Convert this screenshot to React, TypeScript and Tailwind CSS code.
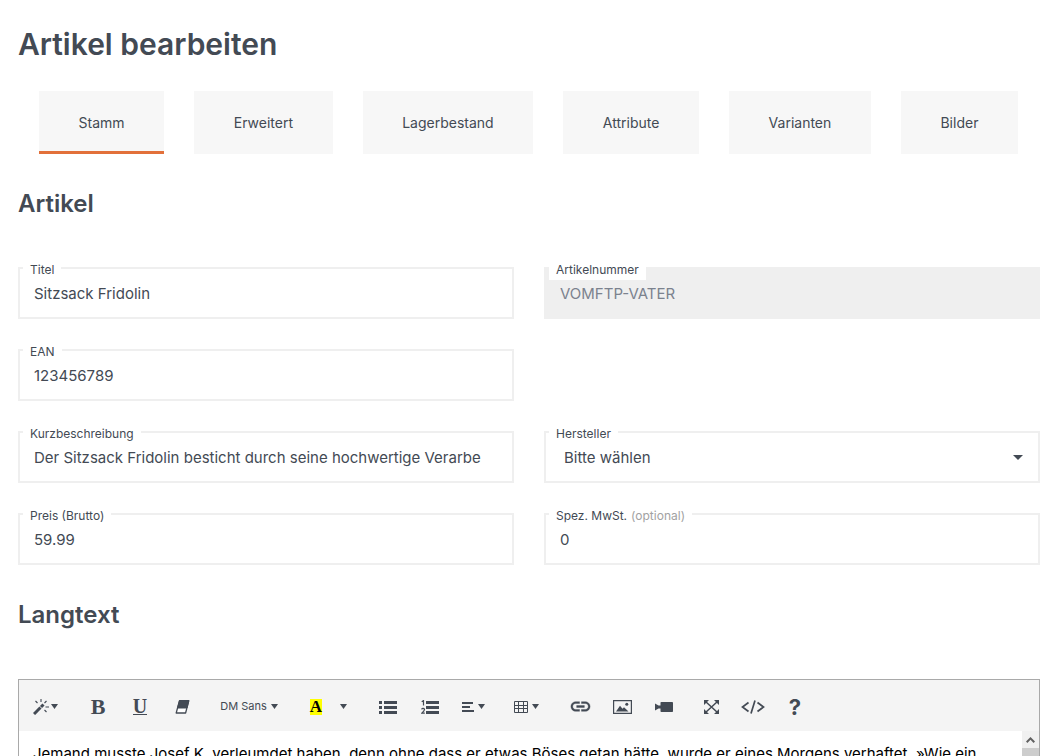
import type { ReactNode } from "react";

const tabs = ["Stamm", "Erweitert", "Lagerbestand", "Attribute", "Varianten", "Bilder"];

const inputClass =
  "block h-[52px] w-full border-2 border-[#efefef] bg-white px-3.5 text-[15px] text-[#434a54] outline-none disabled:bg-[#efefef] disabled:text-[#7b828e]";

function Field({ id, label, optional, children }: { id: string; label: string; optional?: boolean; children: ReactNode }) {
  return (
    <div className="relative">
      <label htmlFor={id} className="absolute -top-2 left-[5px] bg-white px-[7px] text-xs leading-[21px] text-[#434a54]">
        {label}
        {optional && <span className="pl-1 text-[#a2a2a2]">(optional)</span>}
      </label>
      {children}
    </div>
  );
}

function Caret() {
  return (
    <svg width="7" height="5" viewBox="0 0 7 5" fill="currentColor" aria-hidden="true">
      <path d="M0 0h7L3.5 5z" />
    </svg>
  );
}

function Tool({ label, width = "w-[42px]", children }: { label: string; width?: string; children: ReactNode }) {
  return (
    <button type="button" aria-label={label} className={`flex h-full shrink-0 items-center justify-center gap-1 ${width}`}>
      {children}
    </button>
  );
}

function Group({ children }: { children: ReactNode }) {
  return <div className="flex h-full">{children}</div>;
}

function Toolbar() {
  return (
    <div role="toolbar" aria-label="Formatierung" className="flex h-[51px] shrink-0 items-center gap-[5px] bg-[#f4f4f4] pt-0.5 text-[#434a54]">
      <Group>
        <Tool label="Stil" width="w-[53px]">
          <span className="flex items-center gap-0.5">
            <svg width="16" height="16" viewBox="0 0 16 16" stroke="currentColor" fill="none" aria-hidden="true">
              <path d="M1 15l6.500-6.500" strokeWidth="3" />
              <path d="M8 8l2.500-2.500" strokeWidth="3" />
              <path d="M8 0v3M2.500 2l2 2M13.500 2l-2 2M12.500 8H16M11.500 11l2 2" strokeWidth="1.100" />
            </svg>
            <Caret />
          </span>
        </Tool>
      </Group>
      <Group>
        <Tool label="Fett">
          <span className="font-['Liberation_Serif',serif] text-[22px] leading-none font-bold">B</span>
        </Tool>
        <Tool label="Unterstrichen">
          <span className="border-b border-current font-['Liberation_Serif',serif] text-[20px] leading-[16px] font-bold">U</span>
        </Tool>
        <Tool label="Formatierung entfernen">
          <svg width="15" height="14" viewBox="0 0 15 14" aria-hidden="true">
            <path d="M4.500 .7h9.300L10.600 13H1.200z" fill="#fff" stroke="currentColor" strokeWidth="1.300" strokeLinejoin="round" />
            <path d="M4.500 .7h9.300L12 8H2.500z" fill="currentColor" stroke="currentColor" strokeLinejoin="round" />
          </svg>
        </Tool>
      </Group>
      <Group>
        <Tool label="Schriftart" width="w-[82px]">
          <span className="text-[11px]">DM Sans</span>
          <Caret />
        </Tool>
      </Group>
      <Group>
        <Tool label="Textfarbe">
          <span className="bg-[#ffff00] font-['Liberation_Serif',serif] text-[17px] leading-4 font-bold text-black">A</span>
        </Tool>
        <Tool label="Weitere Farben" width="w-[12px]">
          <Caret />
        </Tool>
        <span className="w-[13px]" />
      </Group>
      <Group>
        <Tool label="Aufzählung">
          <svg width="18" height="14" viewBox="0 0 18 14" fill="currentColor" aria-hidden="true">
            <path d="M0 1h3v3H0zM5 1h13v3H5zM0 6h3v3H0zM5 6h13v3H5zM0 11h3v3H0zM5 11h13v3H5z" />
          </svg>
        </Tool>
        <Tool label="Nummerierte Liste">
          <svg width="18" height="14" viewBox="0 0 18 14" fill="currentColor" aria-hidden="true">
            <path d="M5 1h13v3H5zM5 6h13v3H5zM5 11h13v3H5z" />
            <path d="M.7 1.700L2.500.6v5M.6 9.400q.3-1 1.500-1t1.400 1Q3.500 10.500.8 13.200h3" fill="none" stroke="currentColor" strokeWidth="1.200" />
          </svg>
        </Tool>
        <Tool label="Absatz" width="w-[45px]">
          <svg width="12" height="10" viewBox="0 0 12 10" fill="currentColor" aria-hidden="true">
            <path d="M0 0h11v2H0zM0 4h8v2H0zM0 8h12v2H0z" />
          </svg>
          <Caret />
        </Tool>
      </Group>
      <Group>
        <Tool label="Tabelle" width="w-[51px]">
          <svg width="14" height="12" viewBox="0 0 14 12" fill="none" stroke="currentColor" aria-hidden="true">
            <path d="M.5 .5h13v11H.5zM4.500 0v12M9.500 0v12M0 4.500h14M0 7.500h14" />
          </svg>
          <Caret />
        </Tool>
        <span className="w-0.5" />
      </Group>
      <Group>
        <Tool label="Link">
          <svg width="23" height="23" viewBox="0 0 24 24" fill="currentColor" stroke="currentColor" strokeWidth=".4" aria-hidden="true">
            <path d="M3.900 12c0-1.710 1.390-3.100 3.100-3.100h4V7H7c-2.760 0-5 2.240-5 5s2.240 5 5 5h4v-1.900H7c-1.710 0-3.100-1.390-3.100-3.100zM8 13h8v-2H8v2zm9-6h-4v1.900h4c1.710 0 3.100 1.390 3.100 3.100s-1.390 3.100-3.100 3.100h-4V17h4c2.760 0 5-2.240 5-5s-2.240-5-5-5z" />
          </svg>
        </Tool>
        <Tool label="Bild">
          <svg width="19" height="14" viewBox="0 0 19 14" fill="currentColor" aria-hidden="true">
            <path d="M.6 .6h17.800v12.800H.6z" fill="none" stroke="currentColor" strokeWidth="1.200" />
            <path d="M3 11.500L7 5.800l2.500 3 1.500-1.500 4.500 4.200z" />
            <circle cx="13.800" cy="4.300" r="1.500" />
          </svg>
        </Tool>
        <Tool label="Video">
          <svg width="18" height="10" viewBox="0 0 18 10" fill="currentColor" aria-hidden="true">
            <rect x="5.500" width="12.500" height="10" rx=".8" />
            <path d="M0 1.500l3.500 2H6v3H3.500l-3.500 2z" />
          </svg>
        </Tool>
      </Group>
      <Group>
        <Tool label="Vollbild">
          <svg width="15" height="14" viewBox="0 0 15 14" fill="currentColor" aria-hidden="true">
            <path d="M1.500 1.500l12 11M13.500 1.500l-12 11" stroke="currentColor" strokeWidth="1.500" />
            <path d="M0 0h5L0 5zM15 0v5l-5-5zM0 14V9l5 5zM15 14h-5l5-5z" />
          </svg>
        </Tool>
        <Tool label="Quelltext">
          <svg width="24" height="14" viewBox="0 0 24 14" fill="none" stroke="currentColor" strokeWidth="1.700" aria-hidden="true">
            <path d="M7.500 2.500L1.500 7l6 4.500M16.500 2.500l6 4.500-6 4.500M14 .5l-4 13" />
          </svg>
        </Tool>
        <Tool label="Hilfe">
          <span className="text-[22px] leading-none font-bold">?</span>
        </Tool>
      </Group>
    </div>
  );
}

export default function App() {
  return (
    <main className="flex h-screen flex-col overflow-hidden bg-white pr-[11px] pl-[18px] font-[Inter,sans-serif] text-[#434a54]">
      <h1 className="mt-6 shrink-0 text-[30px] leading-10 font-semibold">Artikel bearbeiten</h1>

      <nav aria-label="Artikelbereiche" className="mt-[27px] flex shrink-0 gap-[30px] pr-[22px] pl-[21px]">
        {tabs.map((tab, index) => (
          <a
            key={tab}
            href={`#${tab.toLowerCase()}`}
            className={`flex h-[63px] flex-auto items-center justify-center border-b-3 bg-[#f7f7f7] pt-1 text-sm ${
              index === 0 ? "border-[#e2703a]" : "border-[#f7f7f7]"
            }`}
          >
            {tab}
          </a>
        ))}
      </nav>

      <h2 className="mt-[34px] shrink-0 text-2xl leading-8 font-semibold">Artikel</h2>

      <form className="mt-[47px] grid shrink-0 grid-cols-2 gap-[30px]">
        <Field id="titel" label="Titel">
          <input id="titel" className={inputClass} defaultValue="Sitzsack Fridolin" />
        </Field>
        <Field id="artikelnummer" label="Artikelnummer">
          <input id="artikelnummer" className={inputClass} disabled defaultValue="VOMFTP-VATER" />
        </Field>
        <div className="col-span-2 grid grid-cols-2 gap-[30px]">
          <Field id="ean" label="EAN">
            <input id="ean" className={inputClass} defaultValue="123456789" />
          </Field>
        </div>
        <Field id="kurzbeschreibung" label="Kurzbeschreibung">
          <input
            id="kurzbeschreibung"
            className={inputClass}
            defaultValue="Der Sitzsack Fridolin besticht durch seine hochwertige Verarbe"
          />
        </Field>
        <Field id="hersteller" label="Hersteller">
          <select id="hersteller" className={`${inputClass} appearance-none pt-0.5 pl-[18px]`}>
            <option>Bitte wählen</option>
          </select>
          <svg className="pointer-events-none absolute top-6 right-[17px]" width="10" height="5" viewBox="0 0 10 5" fill="currentColor" aria-hidden="true">
            <path d="M0 0h10L5 5z" />
          </svg>
        </Field>
        <Field id="preis" label="Preis (Brutto)">
          <input id="preis" className={inputClass} defaultValue="59.99" />
        </Field>
        <Field id="mwst" label="Spez. MwSt." optional>
          <input id="mwst" className={inputClass} defaultValue="0" />
        </Field>
      </form>

      <h2 className="mt-[34px] shrink-0 text-2xl leading-8 font-semibold">Langtext</h2>

      <section className="mt-12 flex min-h-0 flex-1 flex-col border border-b-0 border-[#a9a9a9]">
        <Toolbar />
        <div className="flex min-h-0 flex-1">
          <div className="flex-1 overflow-hidden px-3.5 pt-[11px] text-[15px] leading-6 whitespace-nowrap text-black">
            Jemand musste Josef K. verleumdet haben, denn ohne dass er etwas Böses getan hätte, wurde er eines Morgens verhaftet. »Wie ein
          </div>
          <div className="flex w-[17px] flex-col bg-[#cdcdcd]" aria-hidden="true">
            <div className="flex h-[17px] items-center justify-center bg-[#f0f0f0]">
              <svg width="9" height="6" viewBox="0 0 9 6" fill="none" stroke="#606060" strokeWidth="2">
                <path d="M.7 5.200l3.800-3.800 3.800 3.800" />
              </svg>
            </div>
          </div>
        </div>
      </section>
    </main>
  );
}
